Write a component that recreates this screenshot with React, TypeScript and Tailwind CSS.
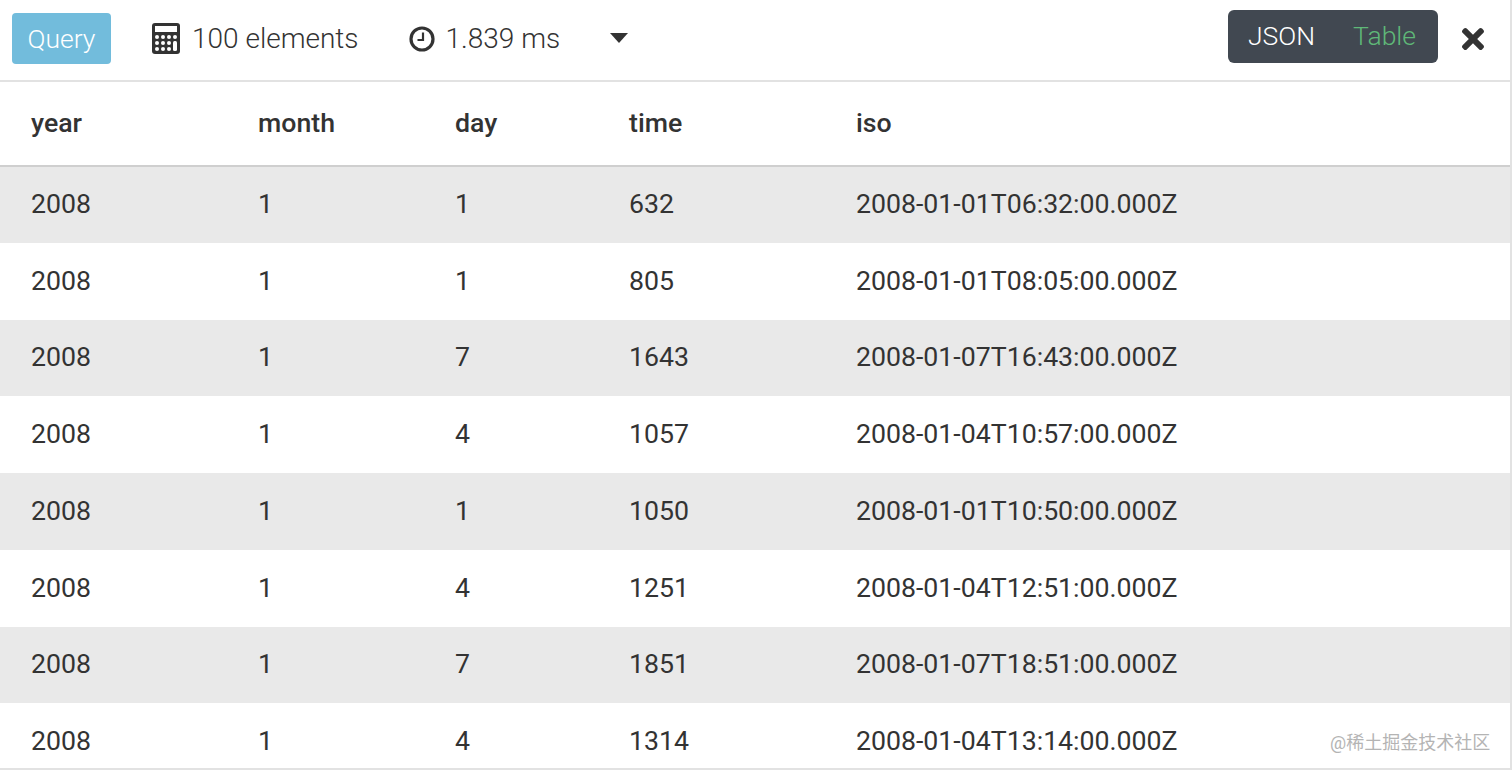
import { FaTimes } from "react-icons/fa"

const rows = [
  ["2008", "1", "1", "632", "2008-01-01T06:32:00.000Z"],
  ["2008", "1", "1", "805", "2008-01-01T08:05:00.000Z"],
  ["2008", "1", "7", "1643", "2008-01-07T16:43:00.000Z"],
  ["2008", "1", "4", "1057", "2008-01-04T10:57:00.000Z"],
  ["2008", "1", "1", "1050", "2008-01-01T10:50:00.000Z"],
  ["2008", "1", "4", "1251", "2008-01-04T12:51:00.000Z"],
  ["2008", "1", "7", "1851", "2008-01-07T18:51:00.000Z"],
  ["2008", "1", "4", "1314", "2008-01-04T13:14:00.000Z"],
]

function CalculatorIcon() {
  const dots = [
    [5, 14], [11, 14], [17, 14], [23, 14],
    [5, 20], [11, 20], [17, 20],
    [5, 26], [11, 26], [17, 26],
  ]
  return (
    <svg width="28" height="31" viewBox="0 0 28 31" className="shrink-0">
      <rect x="0" y="0" width="28" height="31" rx="3" fill="#333" />
      <rect x="3" y="3" width="22" height="6" fill="#fff" />
      {dots.map(([x, y]) => (
        <circle key={`${x}-${y}`} cx={x} cy={y} r="2" fill="#fff" />
      ))}
      <rect x="21" y="18" width="4" height="10" rx="1.5" fill="#fff" />
    </svg>
  )
}

function ClockIcon() {
  return (
    <svg width="26" height="26" viewBox="0 0 26 26" className="shrink-0">
      <circle cx="13" cy="13" r="11" fill="none" stroke="#333" strokeWidth="3.2" />
      <path d="M14 6.5V14H8.5" fill="none" stroke="#333" strokeWidth="2.2" />
    </svg>
  )
}

export default function App() {
  return (
    <div className="h-[774px] w-[1512px] overflow-hidden bg-white font-['Roboto',sans-serif] text-[#333]">
      <div className="h-[770px] overflow-hidden border-r-2 border-b-2 border-[#e2e2e2]">
        {/* Toolbar */}
        <div className="flex h-[82px] items-center border-b-2 border-[#e2e2e2] pl-3 pr-[21px]">
          <button className="mb-[3px] h-[51px] w-[99px] rounded bg-[#72bcdc] text-[26.5px] font-light text-white">
            Query
          </button>
          <div className="mb-[3px] ml-[41px] flex items-center gap-[12px] text-[28px] font-light">
            <CalculatorIcon />
            <span>100 elements</span>
          </div>
          <div className="mb-[3px] ml-[50px] flex items-center gap-[11px] text-[28px] font-light">
            <ClockIcon />
            <span>1.839 ms</span>
          </div>
          <div className="mb-[5px] ml-[50px] h-0 w-0 border-x-[9px] border-t-[10px] border-x-transparent border-t-[#333]" />
          <div className="mb-[7px] ml-auto flex h-[53px] w-[210px] items-center rounded-md bg-[#414851] pb-[2px] pl-[20px] text-[26.5px] font-light">
            <span className="text-white">JSON</span>
            <span className="ml-[38px] text-[#5fb878]">Table</span>
          </div>
          <FaTimes className="mb-[3px] ml-[19px] text-[32px] text-[#333]" />
        </div>

        {/* Results */}
        <table className="w-full table-fixed border-collapse text-left text-[26.7px]">
          <colgroup>
            <col className="w-[258px]" />
            <col className="w-[197px]" />
            <col className="w-[174px]" />
            <col className="w-[227px]" />
            <col />
          </colgroup>
          <thead>
            <tr className="h-[84px] border-b-2 border-[#cfcfcf]">
              <th className="pl-[31px] font-medium">year</th>
              <th className="font-medium">month</th>
              <th className="font-medium">day</th>
              <th className="font-medium">time</th>
              <th className="font-medium">iso</th>
            </tr>
          </thead>
          <tbody>
            {rows.map((row, i) => (
              <tr key={i} className={i % 2 === 0 ? "h-[76.75px] bg-[#e9e9e9]" : "h-[76.75px] bg-white"}>
                <td className="pb-px pl-[31px]">{row[0]}</td>
                <td className="pb-px">{row[1]}</td>
                <td className="pb-px">{row[2]}</td>
                <td className="pb-px">{row[3]}</td>
                <td className="pb-px">{row[4]}</td>
              </tr>
            ))}
          </tbody>
        </table>
      </div>

      {/* Watermark */}
      <div className="absolute top-[731px] left-[1330px] font-['Roboto','Noto_Sans_CJK_SC',sans-serif] text-[18px] leading-[24px] text-[#b4b4b4]">
        @稀土掘金技术社区
      </div>
    </div>
  )
}
